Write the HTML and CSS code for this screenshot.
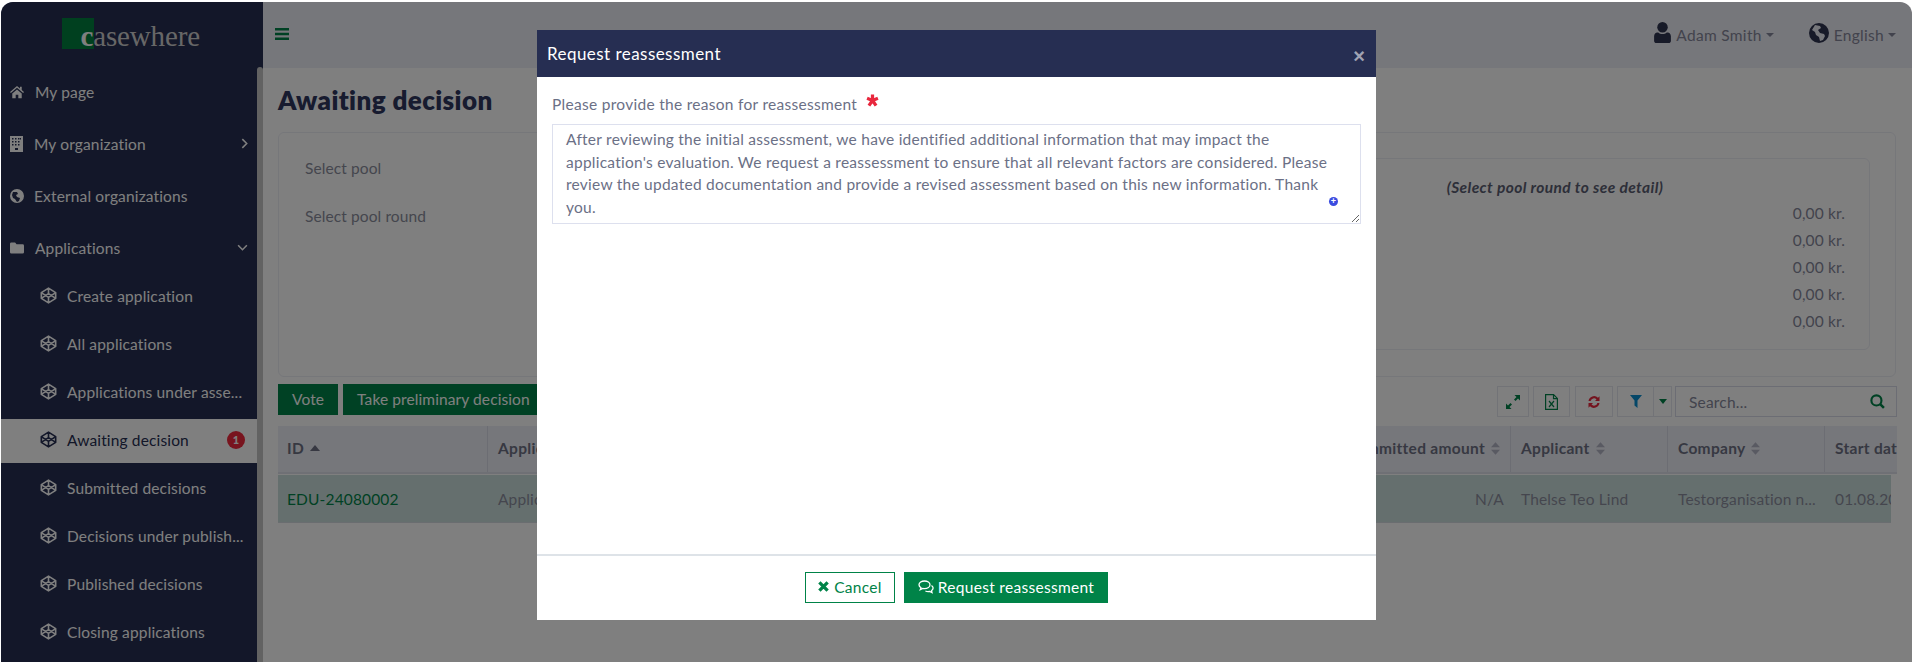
FILE: index.html
```html
<!DOCTYPE html>
<html lang="en">
<head>
<meta charset="utf-8">
<title>Awaiting decision</title>
<link rel="stylesheet" href="styles.css">
</head>
<body>
<svg class="defs" width="0" height="0" aria-hidden="true">
  <symbol id="codepen" viewBox="0 0 18 18">
    <path d="M9 1.2 16.6 6v6L9 16.8 1.4 12V6z M1.4 6 9 11l7.600-5 M1.400 12 9 7l7.600 5 M9 1.200V7 M9 11v5.800" fill="none" stroke="currentColor" stroke-width="1.700" stroke-linejoin="round"/>
  </symbol>
  <symbol id="sort" viewBox="0 0 10 14">
    <path d="M5 0 10 5.500H0z M0 8.500h10L5 14z" fill="currentColor"/>
  </symbol>
</svg>
<div class="window">
  <aside class="sidebar">
    <div class="logo"><span class="logo-mark"></span><span class="logo-text"><b>c</b>asewhere</span></div>
    <nav class="menu">
      <a class="item"><svg class="ico" viewBox="0 0 16 14"><path d="M8 0 0 7l1 1.200L8 2.200l7 6L16 7l-2.600-2.300V1h-2v2L8 0zM2.600 8.700V14h3.900v-3.800h3V14h3.900V8.700L8 4z" fill="currentColor"/></svg><span class="lbl">My page</span></a>
      <a class="item"><svg class="ico" viewBox="0 0 14 16"><path fill-rule="evenodd" d="M0 0h13v16H0zM2 2v1.500h1.500V2zm3 0v1.500h1.500V2zm3 0v1.500h1.500V2zm2 0v1.500h1V2zM2 5v1.500h1.500V5zm3 0v1.500h1.500V5zm3 0v1.500h1.500V5zM2 8v1.500h1.500V8zm3 0v1.500h1.500V8zm3 0v1.500h1.500V8zM5 12v2h3v-2z" fill="currentColor"/></svg><span class="lbl lbl-tight">My organization</span><svg class="chev" viewBox="0 0 8 12"><path d="M1.500 1 6.500 6l-5 5" fill="none" stroke="currentColor" stroke-width="1.800"/></svg></a>
      <a class="item"><svg class="ico" viewBox="0 0 14 14"><path fill-rule="evenodd" d="M7 0a7 7 0 1 0 0 14A7 7 0 0 0 7 0zM3 3h4l1 2-2 1 1 2 3 1-1 3-2 1-2-3-2-1-1-3z" fill="currentColor"/></svg><span class="lbl lbl-tight">External organizations</span></a>
      <a class="item item-open"><svg class="ico" viewBox="0 0 15 12"><path d="M1.500 0h4L7 2h6.500A1.500 1.500 0 0 1 15 3.500V10.500A1.500 1.500 0 0 1 13.500 12H1.500A1.500 1.500 0 0 1 0 10.500V1.500A1.500 1.500 0 0 1 1.500 0z" fill="currentColor"/></svg><span class="lbl">Applications</span><svg class="chev chev-down" viewBox="0 0 12 8"><path d="M1 1.500 6 6.500l5-5" fill="none" stroke="currentColor" stroke-width="1.800"/></svg></a>
      <a class="sub"><svg class="cp"><use href="#codepen"/></svg><span class="sub-lbl">Create application</span></a>
      <a class="sub"><svg class="cp"><use href="#codepen"/></svg><span class="sub-lbl">All applications</span></a>
      <a class="sub"><svg class="cp"><use href="#codepen"/></svg><span class="sub-lbl">Applications under asse...</span></a>
      <a class="sub active"><svg class="cp"><use href="#codepen"/></svg><span class="sub-lbl">Awaiting decision</span><span class="badge">1</span></a>
      <a class="sub"><svg class="cp"><use href="#codepen"/></svg><span class="sub-lbl">Submitted decisions</span></a>
      <a class="sub"><svg class="cp"><use href="#codepen"/></svg><span class="sub-lbl">Decisions under publish...</span></a>
      <a class="sub"><svg class="cp"><use href="#codepen"/></svg><span class="sub-lbl">Published decisions</span></a>
      <a class="sub"><svg class="cp"><use href="#codepen"/></svg><span class="sub-lbl">Closing applications</span></a>
    </nav>
    <div class="scrollbar"></div>
  </aside>

  <main class="main">
    <header class="navbar">
      <svg class="bars" viewBox="0 0 14 12"><path d="M0 0h14v2.400H0zM0 4.800h14v2.400H0zM0 9.600h14V12H0z" fill="currentColor"/></svg>
      <div class="nav-right">
        <span class="nav-item"><svg class="nav-user" viewBox="0 0 16 20"><circle cx="8" cy="5" r="5" fill="currentColor"/><path d="M0 18v-4.500C0 11.500 1.500 10 3 10h1c1 1 2.500 1.500 4 1.500s3-.5 4-1.500h1c1.500 0 3 1.500 3 3.500V18c0 1-1 2-2 2H2c-1 0-2-1-2-2z" fill="currentColor"/></svg>Adam Smith<i class="caret"></i></span>
        <span class="nav-item"><svg class="nav-globe" viewBox="0 0 20 20"><path fill-rule="evenodd" d="M10 0a10 10 0 1 0 0 20 10 10 0 0 0 0-20zM6 2l5 1 1 2-3 2 2 3 4 1 1 2-2 4-3 1-1-4-3-2-1-3-3-2z" fill="currentColor"/></svg>English<i class="caret"></i></span>
      </div>
    </header>
    <section class="content">
      <h1 class="title">Awaiting decision</h1>
      <div class="card">
        <div class="filters">
          <div class="filter">Select pool</div>
          <div class="filter">Select pool round</div>
        </div>
        <div class="summary">
          <div class="summary-title">(Select pool round to see detail)</div>
          <div class="amount">0,00 kr.</div>
          <div class="amount">0,00 kr.</div>
          <div class="amount">0,00 kr.</div>
          <div class="amount">0,00 kr.</div>
          <div class="amount">0,00 kr.</div>
        </div>
      </div>
      <div class="toolbar">
        <button class="btn">Vote</button>
        <button class="btn">Take preliminary decision</button>
        <div class="tools">
          <span class="tool t-expand"><svg viewBox="0 0 14 14"><path d="M8.500 0H14v5.500L12 3.500 9.500 6 8 4.500 10.500 2zM5.500 14H0V8.500L2 10.500 4.500 8 6 9.500 3.500 12z" fill="currentColor"/></svg></span>
          <span class="tool t-excel"><svg viewBox="0 0 13 16"><path d="M.600.600h8l3.800 3.800v11H.600zM8.500.600v4h4" fill="none" stroke="currentColor" stroke-width="1.200"/><path d="M4 7l5 6M9 7l-5 6" fill="none" stroke="currentColor" stroke-width="1.200"/></svg></span>
          <span class="tool t-refresh"><svg viewBox="0 0 14 14"><path d="M1.500 6A5.600 5.600 0 0 1 11 2.800L12.500 1.300V6H8l1.500-1.600A3.500 3.500 0 0 0 3.600 6zM12.500 8A5.600 5.600 0 0 1 3 11.200L1.500 12.700V8H6l-1.500 1.600A3.500 3.500 0 0 0 10.400 8z" fill="currentColor"/></svg></span>
          <span class="tool-group">
            <span class="tool t-filter"><svg viewBox="0 0 12 13"><path d="M0 0h12L7.500 5.500V13L4.500 10.500V5.500z" fill="currentColor"/></svg></span>
            <span class="tool t-drop"><i class="drop-caret"></i></span>
          </span>
          <label class="search"><span class="search-text">Search...</span><svg viewBox="0 0 14 14"><circle cx="6" cy="6" r="4.700" fill="none" stroke="currentColor" stroke-width="2"/><path d="M9.500 9.500 13 13" stroke="currentColor" stroke-width="2.400"/></svg></label>
        </div>
      </div>
      <div class="table">
        <div class="tr thead">
          <div class="th"><span>ID</span><i class="sort-up"></i></div>
          <div class="th"><span>Application name</span><svg class="sort"><use href="#sort"/></svg></div>
          <div class="th th-end"><span>Committed amount</span><svg class="sort"><use href="#sort"/></svg></div>
          <div class="th"><span>Applicant</span><svg class="sort"><use href="#sort"/></svg></div>
          <div class="th"><span>Company</span><svg class="sort"><use href="#sort"/></svg></div>
          <div class="th th-last"><span>Start date</span></div>
        </div>
        <div class="tr tbody">
          <div class="td td-id">EDU-24080002</div>
          <div class="td">Application</div>
          <div class="td td-end">N/A</div>
          <div class="td">Thelse Teo Lind</div>
          <div class="td">Testorganisation n...</div>
          <div class="td td-last">01.08.2024</div>
        </div>
      </div>
    </section>
  </main>

  <div class="overlay">
    <div class="modal">
      <div class="modal-head"><span class="modal-title">Request reassessment</span><span class="close">×</span></div>
      <div class="modal-body">
        <label class="field-label" for="reason">Please provide the reason for reassessment<svg class="req" viewBox="0 0 12 12"><path d="M6 6V.500M6 6l5-2M6 6l3.300 4.800M6 6l-3.300 4.800M6 6 1 4" stroke="currentColor" stroke-width="3" fill="none"/></svg></label>
        <div class="area-wrap">
          <textarea id="reason" class="area">After reviewing the initial assessment, we have identified additional information that may impact the
application's evaluation. We request a reassessment to ensure that all relevant factors are considered. Please
review the updated documentation and provide a revised assessment based on this new information. Thank
you.</textarea>
          <span class="dot">+</span>
        </div>
      </div>
      <div class="modal-foot">
        <button class="mbtn mbtn-line"><svg class="mi" viewBox="0 0 12 12"><path d="M1.500 1.500l9 9M10.500 1.500l-9 9" stroke="currentColor" stroke-width="3.600"/></svg>Cancel</button>
        <button class="mbtn mbtn-fill"><svg class="mi mi-c" viewBox="0 0 16 14"><path d="M6.500 1C3.500 1 1 2.600 1 4.800c0 1.200.8 2.200 2 3l-.7 1.800 2.500-1.200c.5.100 1.100.2 1.700.2 3 0 5.500-1.700 5.500-3.800S9.500 1 6.500 1z" fill="none" stroke="currentColor" stroke-width="1.300"/><path d="M13.500 5.500c1 .7 1.600 1.600 1.600 2.600 0 1-.6 1.900-1.600 2.600l.5 1.900-2.400-1.100c-1.500.3-3 .1-4.200-.5" fill="none" stroke="currentColor" stroke-width="1.300"/></svg>Request reassessment</button>
      </div>
    </div>
  </div>
</div>
</body>
</html>
```
FILE: styles.css
```css
* { box-sizing: border-box; }
html, body { margin: 0; height: 100%; background: #fff; overflow: hidden; }
body { font-family: "Lato", "Liberation Sans", sans-serif; font-size: 15.500px; color: #8a8d9c; }
.defs { position: absolute; }
.window { position: relative; margin: 2px 0 0 1px; height: 660px; display: flex; overflow: hidden; border-radius: 12px 12px 0 0; background: #fff; }

.sidebar { position: relative; width: 262px; flex: none; background: #262e52; color: #fff; }
.logo { position: relative; height: 64.500px; }
.logo-mark { position: absolute; left: 61px; top: 16px; width: 32px; height: 31px; background: #00803f; }
.logo-text { position: absolute; left: 79.500px; top: 16px; font-family: "Liberation Serif", serif; font-size: 29px; line-height: 36px; color: #cfcfcf; letter-spacing: -.15px; }
.logo-text b { color: #fff; }
.menu { display: flex; flex-direction: column; width: 256px; }
.item { height: 52px; display: flex; align-items: center; padding: 0 0 2px 9px; letter-spacing: .15px; }
.item-open { margin-bottom: -2px; }
.ico { width: 14px; height: 16px; flex: none; }
.lbl { margin-left: 11px; }
.lbl-tight { margin-left: 10px; }
.chev { width: 7px; height: 11px; margin-left: auto; margin-right: 9px; }
.chev-down { width: 11px; height: 7px; margin-right: 9px; }
.sub { height: 48px; display: flex; align-items: center; padding: 0 0 2px 39px; letter-spacing: .15px; }
.cp { width: 17px; height: 17px; flex: none; }
.sub-lbl { margin-left: 10px; flex: 1; min-width: 0; white-space: nowrap; }
.sub.active { background: #fff; color: #262e52; height: 44px; margin: 2px 0; }
.sub.active .sub-lbl { flex: none; }
.badge { margin-left: auto; margin-right: 12px; width: 18px; height: 18px; border-radius: 50%; background: #f0283c; color: #fff; font-size: 11px; font-weight: 900; text-align: center; line-height: 18px; }
.scrollbar { position: absolute; right: 0; top: 65px; bottom: 0; width: 6px; border-radius: 3px 3px 0 0; background: #c4c4c4; }

.main { flex: 1; min-width: 0; display: flex; flex-direction: column; }
.navbar { height: 66px; flex: none; display: flex; align-items: center; padding: 0 16px 0 12px; background: #edeef6; }
.bars { width: 14px; height: 12px; color: #008348; margin-top: -2px; }
.nav-right { margin-left: auto; display: flex; align-items: center; gap: 35px; }
.nav-item { display: flex; align-items: center; color: #85879a; letter-spacing: .3px; }
.nav-user { width: 17px; height: 21px; margin-right: 5px; color: #2f3450; margin-top: -5px; }
.nav-globe { width: 20px; height: 20px; margin-right: 5px; color: #2f3450; margin-top: -5px; }
.caret { display: inline-block; margin-left: 4px; border: 4px solid transparent; border-top-color: currentColor; border-bottom: 0; }

.content { flex: 1; padding: 0 0 0 15px; background: #fff; }
.title { margin: 0; height: 64px; padding-top: 16px; font-size: 26px; line-height: 32px; font-weight: 800; color: #2e365e; letter-spacing: .4px; }
.card { width: 1618px; height: 245px; display: flex; justify-content: space-between; padding: 25px 25px 0 26px; border: 1px solid #eceef5; border-radius: 6px; }
.filters { display: flex; flex-direction: column; }
.filter { height: 48px; line-height: 20px; letter-spacing: .1px; }
.summary { width: 630px; height: 192px; padding: 15px 24px 0 0; border: 1px solid #eceef5; border-radius: 6px; color: #85879a; }
.summary-title { height: 26px; line-height: 26px; text-align: center; font-style: italic; font-weight: 700; color: #5b5e72; letter-spacing: .4px; padding-left: 24px; }
.amount { height: 26.900px; line-height: 26.900px; text-align: right; letter-spacing: .15px; }

.toolbar { width: 1619px; margin-top: 7px; display: flex; align-items: flex-start; gap: 5px; }
.btn { height: 31px; padding: 0 14px 2px; border: 0; font: inherit; letter-spacing: .1px; color: #fff; background: #008348; }
.tools { margin: 2px 0 0 auto; display: flex; gap: 4.500px; }
.tool { height: 31px; display: flex; align-items: center; justify-content: center; border: 1px solid #e4e6ef; }
.tool svg { display: block; }
.t-expand { width: 32px; color: #008348; }
.t-expand svg { width: 14px; height: 14px; }
.t-excel { width: 37px; color: #008348; }
.t-excel svg { width: 13px; height: 16px; }
.t-refresh { width: 38px; color: #e8273d; }
.t-refresh svg { width: 14px; height: 14px; }
.tool-group { display: flex; }
.t-filter { width: 37px; color: #0b8fd0; }
.t-filter svg { width: 12px; height: 13px; }
.t-drop { width: 19px; margin-left: -1px; color: #008348; }
.drop-caret { border: 4px solid transparent; border-top: 5px solid currentColor; border-bottom: 0; }
.search { width: 222px; height: 31px; display: flex; align-items: center; justify-content: space-between; padding: 0 11px 0 13px; border: 1px solid #d9dbe9; margin-left: -1.500px; color: #85879a; letter-spacing: .2px; }
.search svg { width: 15px; height: 15px; color: #008348; }

.table { width: 1619px; margin-top: 9px; overflow: hidden; }
.tr { display: grid; grid-template-columns: 210px 623px 400px 157px 157px 72px; }
.thead { height: 48px; background: #edeef6; border-bottom: 2px solid #dfe1ea; color: #6e7184; font-weight: 700; letter-spacing: .3px; }
.th { display: flex; align-items: center; gap: 6px; padding: 0 9px 2px 10px; border-right: 1px solid #d9dbe6; overflow: hidden; white-space: nowrap; }
.th:first-child { padding-left: 9px; }
.th-end { justify-content: flex-end; padding-right: 10px; }
.th-last { border-right: 0; }
.sort { width: 9px; height: 13px; color: #b3b5c4; flex: none; }
.sort-up { border: 5px solid transparent; border-bottom: 6px solid #6e7184; border-top: 0; }
.tbody { width: 1613px; height: 48px; margin-top: 1px; grid-template-columns: 210px 623px 400px 157px 157px 66px; background: #cbdfdd; border-bottom: 1px solid #d5dbe0; }
.td { display: flex; align-items: center; padding: 0 9px 0 10px; overflow: hidden; white-space: nowrap; letter-spacing: .15px; }
.td:first-child { padding-left: 9px; }
.td-id { color: #008348; }
.td-end { justify-content: flex-end; padding-right: 7px; }
.td-last { padding-right: 0; }

.overlay { position: absolute; inset: 0; background: rgba(0, 0, 0, .5); }
.modal { position: absolute; left: 536px; top: 28px; width: 839px; height: 590px; display: flex; flex-direction: column; background: #fff; }
.modal-head { height: 47px; flex: none; display: flex; align-items: center; justify-content: space-between; padding: 0 10px; background: #262e52; color: #fff; }
.modal-title { font-size: 17px; letter-spacing: .45px; }
.close { font: 700 20px/1 "Liberation Sans", sans-serif; color: #a0a3b3; padding-top: 5px; margin-right: 1px; }
.modal-body { flex: 1; padding: 17px 15px 0; }
.field-label { display: block; height: 30px; line-height: 20px; color: #6b7086; letter-spacing: .29px; }
.req { width: 13px; height: 13px; margin-left: 9px; color: #e8273d; vertical-align: 3px; }
.area-wrap { position: relative; }
.area { display: block; width: 809px; height: 100px; padding: 3px 12px 0 13px; border: 1px solid #dde0ee; border-radius: 0; font: inherit; line-height: 22.700px; letter-spacing: .25px; color: #6b7086; resize: vertical; white-space: pre; overflow: hidden; outline: 0; background: #fff; }
.dot { position: absolute; right: 23px; top: 73px; width: 9px; height: 9px; border-radius: 50%; background: #3a4be0; color: #fff; font: 700 9px/9px "Liberation Sans", sans-serif; text-align: center; }
.modal-foot { height: 66px; flex: none; display: flex; align-items: flex-start; justify-content: center; gap: 9px; padding-top: 16px; border-top: 2px solid #dee3e8; }
.mbtn { height: 31px; display: flex; align-items: center; font: inherit; letter-spacing: .3px; padding: 0 0 2px; }
.mbtn-line { width: 90px; justify-content: center; background: #fff; color: #008348; border: 1px solid #008348; }
.mbtn-fill { width: 204px; justify-content: center; background: #008348; color: #fff; border: 1px solid #008348; }
.mi { width: 11px; height: 11px; margin-right: 5px; }
.mi-c { width: 16px; height: 14px; margin-right: 4px; }
```
